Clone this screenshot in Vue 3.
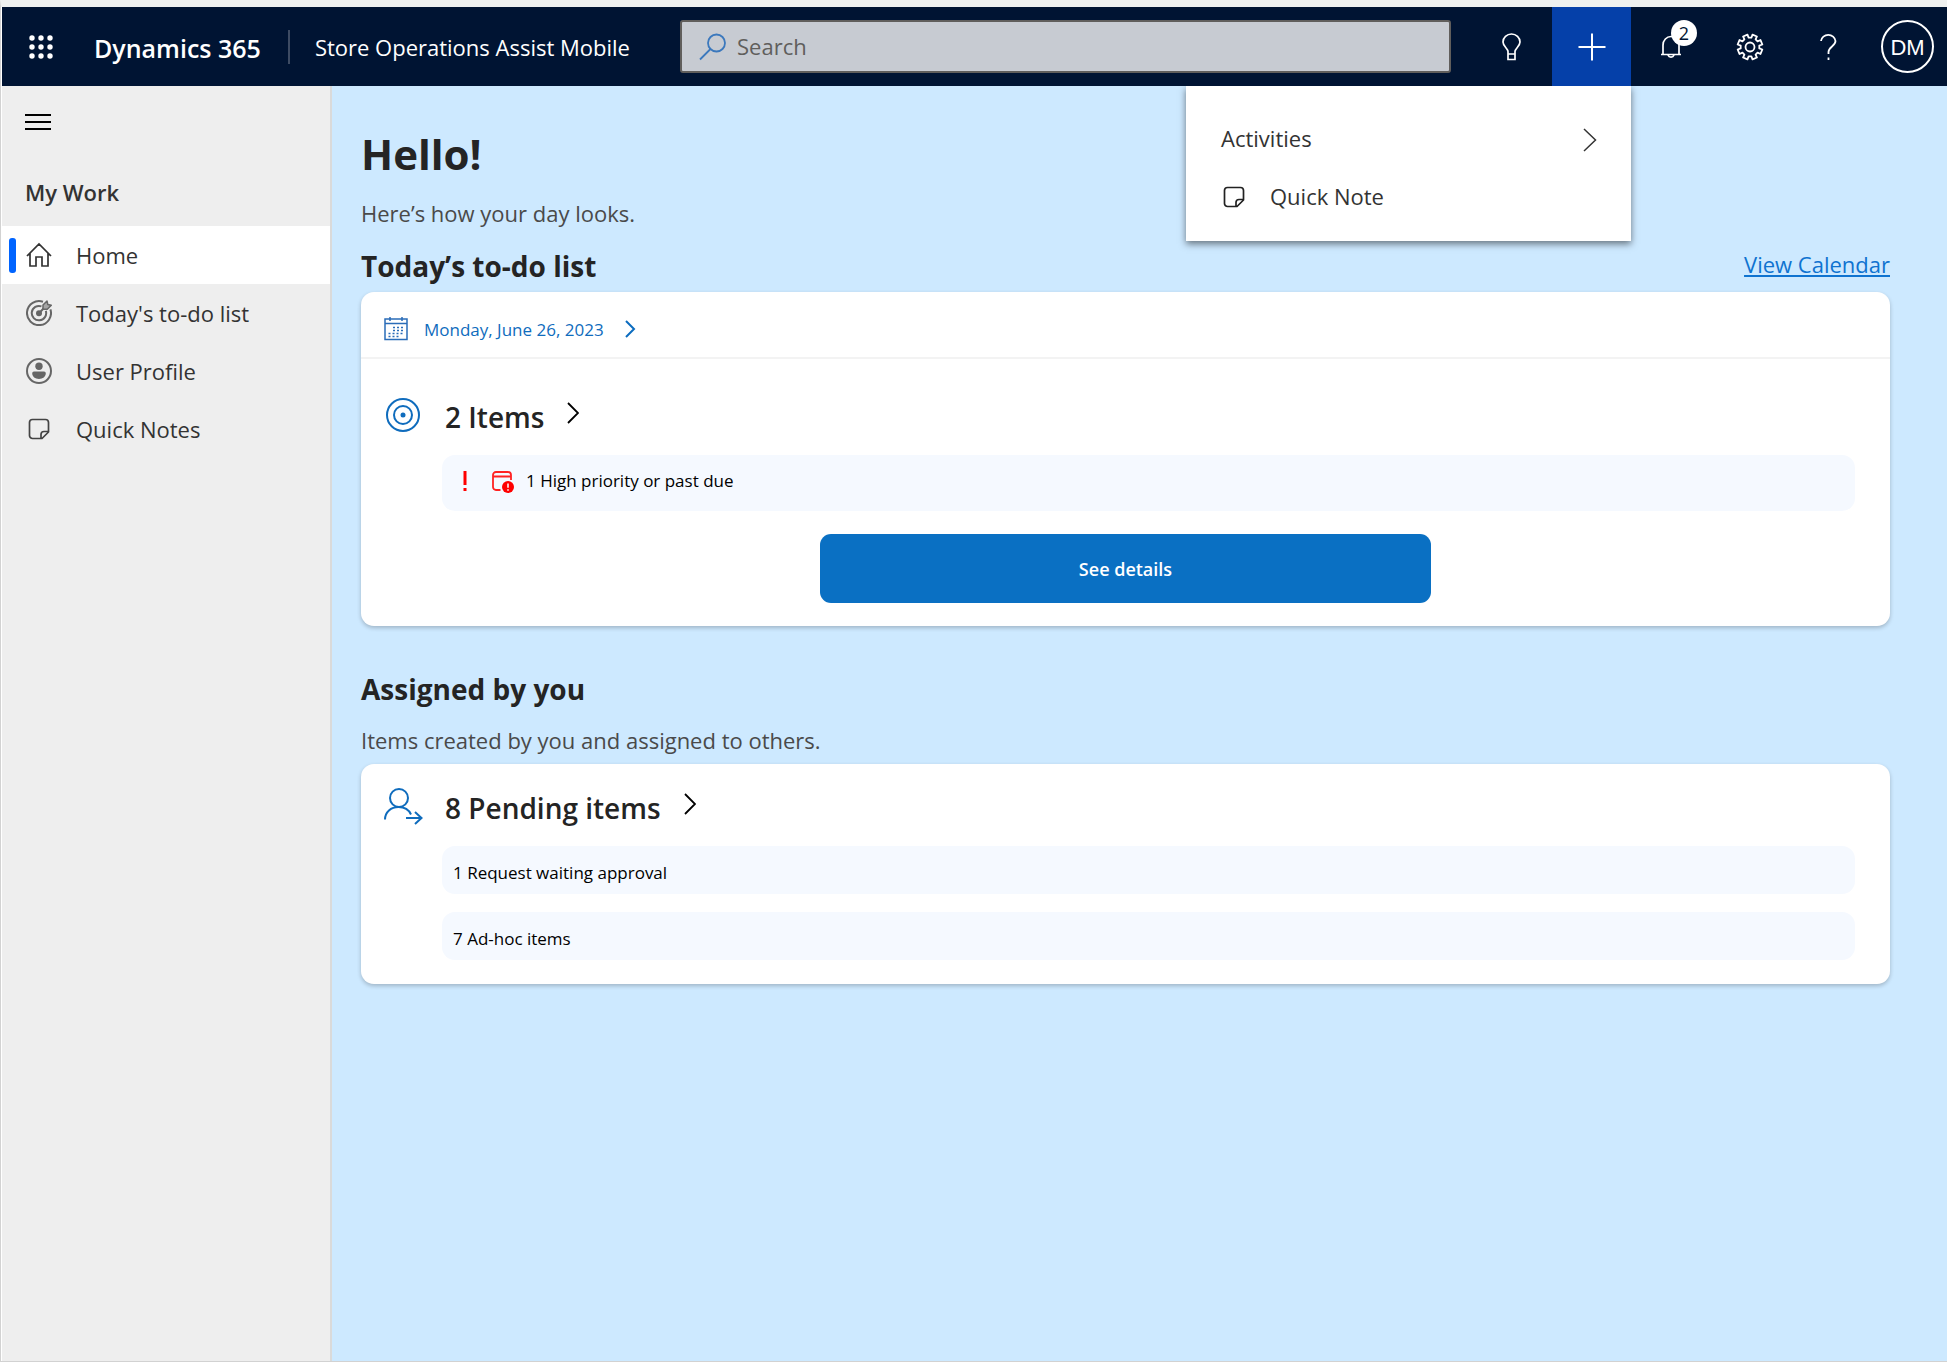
<script setup>
import { ref } from 'vue'

const query = ref('')

const navItems = [
  { label: 'Home', icon: 'home', active: true },
  { label: "Today's to-do list", icon: 'goal' },
  { label: 'User Profile', icon: 'user' },
  { label: 'Quick Notes', icon: 'note' },
]

const pending = ['1 Request waiting approval', '7 Ad-hoc items']

const dots = [4, 13, 22]

// Outline of the settings cog: eight teeth around a 28px box.
const polar = (r, deg) => {
  const a = (deg * Math.PI) / 180
  return `${(14 + r * Math.cos(a)).toFixed(2)} ${(14 + r * Math.sin(a)).toFixed(2)}`
}
const cog = Array.from({ length: 8 }, (_, i) => {
  const c = i * 45 + 22.5
  return `${i ? 'L' : 'M'}${polar(9.4, c - 14)} L${polar(12.6, c - 11)} L${polar(12.6, c + 11)} L${polar(9.4, c + 14)}`
}).join(' ') + ' Z'
</script>

<template>
  <div class="shell">
    <header class="topbar">
      <div class="brand">
        <button class="waffle" type="button" aria-label="App launcher">
          <svg width="26" height="26" viewBox="0 0 26 26" fill="#fff">
            <template v-for="y in dots" :key="y">
              <circle v-for="x in dots" :key="x" :cx="x" :cy="y" r="2.700" />
            </template>
          </svg>
        </button>
        <span class="product">Dynamics 365</span>
        <span class="divider"></span>
        <span class="app-name">Store Operations Assist Mobile</span>
      </div>

      <label class="search">
        <svg width="28" height="28" viewBox="0 0 28 28" fill="none" stroke="#3b78bd" stroke-width="1.800">
          <circle cx="17.500" cy="10" r="8.500" />
          <path d="M11.500 16 1 26.500" />
        </svg>
        <input v-model="query" type="search" placeholder="Search" aria-label="Search" />
      </label>

      <div class="actions">
        <button type="button" aria-label="Tips">
          <svg width="28" height="28" viewBox="0 0 28 28" fill="none" stroke="#fff" stroke-width="1.700">
            <path d="M9 21v-2.500c0-3-5-5-5-9.500a8.500 8 0 0 1 17 0c0 4.500-5 6.500-5 9.500v2.500M9 21h7v5.500h-7z" />
          </svg>
        </button>
        <button class="open" type="button" aria-label="New" aria-expanded="true">
          <svg width="28" height="28" viewBox="0 0 28 28" stroke="#fff" stroke-width="2">
            <path d="M14 .5v27M.5 14h27" />
          </svg>
        </button>
        <button type="button" aria-label="Notifications">
          <svg width="28" height="28" viewBox="0 0 28 28" fill="none" stroke="#fff" stroke-width="1.700">
            <path d="M4 21.500h20M6 21.500v-9.500a8 8.500 0 0 1 16 0v9.500M11 22a3.200 3.200 0 0 0 6 0" />
          </svg>
          <span class="count">2</span>
        </button>
        <button type="button" aria-label="Settings">
          <svg width="28" height="28" viewBox="0 0 28 28" fill="none" stroke="#fff" stroke-width="1.800" stroke-linejoin="round">
            <path :d="cog" />
            <circle cx="14" cy="14" r="4.500" />
          </svg>
        </button>
        <button type="button" aria-label="Help">
          <svg width="28" height="28" viewBox="0 0 28 28" fill="none" stroke="#fff" stroke-width="1.800">
            <path d="M6 8a7.300 7 0 0 1 14.500 0c0 5-7 6-7 11v2M13.500 24.500v2.500" />
          </svg>
        </button>
        <button type="button" aria-label="Account"><span class="avatar">DM</span></button>

        <div class="menu">
          <button type="button">
            Activities
            <svg class="end" width="14" height="24" viewBox="0 0 14 24" fill="none" stroke="#333" stroke-width="1.500">
              <path d="M1 1 12.500 12 1 23" />
            </svg>
          </button>
          <button type="button">
            <svg class="lead" width="26" height="26" viewBox="0 0 26 26" fill="none" stroke="#222" stroke-width="1.700" stroke-linejoin="round">
              <path d="M6.500 3.500h13a3 3 0 0 1 3 3v9.500l-6.500 6.500H6.500a3 3 0 0 1-3-3v-13a3 3 0 0 1 3-3zM22.500 15.500h-4.500a3 3 0 0 0-3 3v4.500" />
            </svg>
            Quick Note
          </button>
        </div>
      </div>
    </header>

    <div class="body">
      <aside class="sidebar">
        <button class="burger" type="button" aria-label="Toggle navigation">
          <svg width="26" height="18" viewBox="0 0 26 18" stroke="#000" stroke-width="2">
            <path d="M0 2h26M0 9h26M0 16h26" />
          </svg>
        </button>
        <h2 class="group">My Work</h2>
        <nav>
          <a v-for="item in navItems" :key="item.label" href="#" class="nav-item" :class="{ active: item.active }">
            <span class="marker"></span>
            <svg v-if="item.icon === 'home'" width="26" height="26" viewBox="0 0 26 26" fill="none" stroke="#333" stroke-width="1.700">
              <path d="M1 14 13 2l12 12M4 11.500v12.500h6v-9h6v9h6v-12.500" />
            </svg>
            <svg v-else-if="item.icon === 'goal'" width="26" height="26" viewBox="0 0 26 26" fill="none" stroke="#666" stroke-width="2">
              <path d="M17 1.800a12 12 0 1 0 7.400 7.600M15.500 6.400a7.200 7.200 0 1 0 4.300 4.500" />
              <circle cx="13" cy="13.200" r="3" fill="#666" stroke="none" />
              <path d="M13 13.200 18 8" />
              <path d="M17 8.500V5l4-4 .8 3.500 3.500.8-4 4H17z" fill="#a5a5a5" stroke-width="1.500" stroke-linejoin="round" />
            </svg>
            <svg v-else-if="item.icon === 'user'" width="26" height="26" viewBox="0 0 26 26" fill="#666">
              <circle cx="13" cy="13" r="12" fill="none" stroke="#666" stroke-width="2" />
              <circle cx="13" cy="8.300" r="3.700" />
              <path d="M8 13.500h10a1.800 1.800 0 0 1 1.800 1.800c0 3.500-3 5.700-6.800 5.700s-6.800-2.200-6.800-5.700A1.800 1.800 0 0 1 8 13.500z" />
            </svg>
            <svg v-else width="26" height="26" viewBox="0 0 26 26" fill="none" stroke="#444" stroke-width="1.700" stroke-linejoin="round">
              <path d="M6.500 3.500h13a3 3 0 0 1 3 3v9.500l-6.500 6.500H6.500a3 3 0 0 1-3-3v-13a3 3 0 0 1 3-3zM22.500 15.500h-4.500a3 3 0 0 0-3 3v4.500" />
            </svg>
            {{ item.label }}
          </a>
        </nav>
      </aside>

      <main class="content">
        <h1>Hello!</h1>
        <p class="sub">Here’s how your day looks.</p>

        <section class="todo">
          <div class="section-head">
            <h2>Today’s to-do list</h2>
            <a href="#">View Calendar</a>
          </div>
          <div class="card">
            <button class="date" type="button">
              <svg width="24" height="24" viewBox="0 0 24 24" fill="none" stroke="#2a6cb8" stroke-width="1.500">
                <path d="M1 2h22v20.500H1zM1 6.500h22M6 0v4M18 0v4" />
                <path d="M9 10.500h11M9 13.500h11M4.500 16.500h15.500M4.500 19.500h12" stroke-dasharray="2 2" />
              </svg>
              <span>Monday, June 26, 2023</span>
              <svg width="12" height="18" viewBox="0 0 12 18" fill="none" stroke="#0b6cbf" stroke-width="2">
                <path d="M2 1 10 9 2 17" />
              </svg>
            </button>
            <div class="card-body first">
              <div class="card-title">
                <svg class="glyph" width="40" height="38" viewBox="0 0 40 38" fill="none" stroke="#0f6cbd" stroke-width="2">
                  <circle cx="19" cy="18" r="16" />
                  <circle cx="19" cy="18" r="9" />
                  <circle cx="19" cy="18" r="2.500" fill="#0f6cbd" stroke="none" />
                </svg>
                <h3>2 Items</h3>
                <svg class="more" width="12" height="22" viewBox="0 0 12 22" fill="none" stroke="#000" stroke-width="1.800">
                  <path d="M1 1 11 11 1 21" />
                </svg>
              </div>
              <div class="pill tall">
                <svg width="6" height="22" viewBox="0 0 6 22" fill="#f00">
                  <path d="M1.500 1h3v14h-3zM1.500 18h3v3h-3z" />
                </svg>
                <svg width="22" height="24" viewBox="0 0 22 24" fill="none" stroke="#f22" stroke-width="1.800">
                  <path d="M8.500 20H4a3 3 0 0 1-3-3V5a3 3 0 0 1 3-3h12a3 3 0 0 1 3 3v5M1 6.500h18" />
                  <circle cx="16" cy="17" r="6" fill="#f00" stroke="none" />
                  <path d="M16 13.500v4.200M16 19.200v1.500" stroke="#fff" stroke-width="1.500" />
                </svg>
                <span>1 High priority or past due</span>
              </div>
            </div>
            <button class="primary" type="button">See details</button>
          </div>
        </section>

        <section class="assigned">
          <h2>Assigned by you</h2>
          <p class="sub">Items created by you and assigned to others.</p>
          <div class="card">
            <div class="card-body">
              <div class="card-title">
                <svg class="glyph" width="40" height="38" viewBox="0 0 40 38" fill="none" stroke="#0f6cbd" stroke-width="2">
                  <circle cx="15" cy="10" r="9" />
                  <path d="M1 31.500C1 24 7 19 14.500 19c6 0 10.500 3 12.500 7.500M22 30h15M31 24l6.500 6-6.500 6" />
                </svg>
                <h3>8 Pending items</h3>
                <svg class="more" width="12" height="22" viewBox="0 0 12 22" fill="none" stroke="#000" stroke-width="1.800">
                  <path d="M1 1 11 11 1 21" />
                </svg>
              </div>
              <div v-for="line in pending" :key="line" class="pill">{{ line }}</div>
            </div>
          </div>
        </section>
      </main>
    </div>
  </div>
</template>

<style>
body {
  margin: 0;
  background: #fff;
}
</style>

<style scoped>
.shell {
  box-sizing: border-box;
  min-height: 100vh;
  display: flex;
  flex-direction: column;
  padding-left: 1px;
  border-top: 7px solid #eff1f0;
  border-left: 1px solid #d2d2d2;
  border-bottom: 1px solid #d2d2d2;
  font-family: "Open Sans", "Noto Sans", sans-serif;
  font-size: 22px;
  line-height: 30px;
  color: #333;
}
.shell * {
  box-sizing: border-box;
}
button {
  padding: 0;
  border: 0;
  background: none;
  font: inherit;
  color: inherit;
  cursor: pointer;
}
svg {
  display: block;
  flex: none;
}
h1,
h2,
h3,
p {
  margin: 0;
}

.topbar {
  display: flex;
  align-items: center;
  height: 79px;
  background: #001433;
  color: #fff;
}
.brand {
  flex: none;
  display: flex;
  align-items: center;
  width: 678px;
  padding-left: 26px;
}
.waffle {
  margin-right: 40px;
}
.product {
  padding-top: 2px;
  font-size: 25px;
  font-weight: 600;
}
.divider {
  width: 2px;
  height: 34px;
  margin: 0 25px 0 27px;
  background: #3d4b63;
}
.search {
  flex: 1;
  display: flex;
  align-items: center;
  gap: 10px;
  height: 53px;
  padding-left: 17px;
  border: 2px solid #605e5c;
  border-radius: 3px;
  background: #c7cbd2;
}
.search input {
  flex: 1;
  min-width: 0;
  padding: 0 0 2px;
  border: 0;
  outline: 0;
  background: none;
  font: inherit;
}
.search input::placeholder {
  color: #605e5c;
  opacity: 1;
}
.actions {
  position: relative;
  flex: none;
  display: flex;
  margin-left: 22px;
}
.actions > button {
  position: relative;
  display: flex;
  align-items: center;
  justify-content: center;
  width: 79px;
  height: 79px;
}
.actions > .open {
  background: #0540a9;
}
.count {
  position: absolute;
  top: 13px;
  left: 40px;
  width: 26px;
  height: 26px;
  border-radius: 50%;
  background: #fff;
  color: #001433;
  font-size: 18px;
  line-height: 26px;
}
.avatar {
  width: 53px;
  height: 53px;
  border: 2px solid #fff;
  border-radius: 50%;
  font-family: "Liberation Sans", sans-serif;
  line-height: 51px;
}
.menu {
  position: absolute;
  top: 79px;
  right: 316px;
  z-index: 2;
  width: 445px;
  padding: 23px 34px 16px 32px;
  background: #fff;
  color: #333;
  box-shadow: 0 3px 7px rgba(0, 0, 0, 0.5);
  clip-path: inset(0 -12px -14px -12px);
}
.menu button {
  display: flex;
  align-items: center;
  width: 100%;
  height: 58px;
  padding-left: 3px;
}
.menu .end {
  margin: 3px 0 0 auto;
}
.menu .lead {
  margin: 2px 23px 0 0;
}

.body {
  flex: 1;
  display: flex;
}
.sidebar {
  flex: none;
  width: 330px;
  border-right: 2px solid #dadada;
  background: #eee;
}
.burger {
  display: flex;
  align-items: center;
  height: 72px;
  margin-left: 23px;
}
.group {
  height: 68px;
  padding-left: 23px;
  font-size: 22px;
  font-weight: 600;
  line-height: 68px;
}
.nav-item {
  display: flex;
  align-items: center;
  height: 58px;
  padding-left: 7px;
  color: #333;
  text-decoration: none;
}
.nav-item svg {
  margin: 0 24px 0 10px;
}
.marker {
  width: 7px;
  height: 35px;
  border-radius: 3px;
}
.active {
  background: #fff;
}
.active .marker {
  background: #0064ff;
}

.content {
  flex: 1;
  min-width: 0;
  padding: 38px 57px 38px 29px;
  background: #cde9ff;
}
h1 {
  font-size: 42px;
  line-height: 60px;
  color: #242424;
}
.content h2 {
  font-size: 28px;
  line-height: 40px;
  color: #242424;
}
.sub {
  color: #4a4a4a;
}
h1 + .sub {
  margin-top: 14px;
}
.section-head {
  display: flex;
  align-items: center;
  justify-content: space-between;
  margin: 18px 0 6px;
}
.section-head a {
  padding-bottom: 5px;
  color: #0f73d0;
}
.assigned {
  margin-top: 43px;
}
.assigned .sub {
  margin: 16px 0 9px;
}
.card {
  display: flow-root;
  border-radius: 13px;
  background: #fff;
  box-shadow: 0 2px 4px rgba(0, 0, 0, 0.22);
}
.date {
  display: flex;
  align-items: center;
  width: 100%;
  height: 67px;
  padding: 8px 0 0 23px;
  border-bottom: 2px solid #f3f3f3;
  font-size: 17px;
  color: #0f6cbd;
}
.date span {
  padding-top: 2px;
  margin: 0 20px 0 16px;
}
.card-body {
  padding: 24px 35px 24px 81px;
}
.card-body.first {
  padding: 38px 35px 0 81px;
}
.card-title {
  display: flex;
  align-items: center;
  height: 40px;
  margin-left: -58px;
}
.glyph {
  margin: 0 21px 2px 0;
}
h3 {
  font-size: 28px;
  font-weight: 600;
  line-height: 40px;
  color: #242424;
}
.more {
  margin: 0 0 8px 23px;
}
.pill {
  display: flex;
  align-items: center;
  height: 48px;
  margin-top: 18px;
  padding: 5px 0 0 11px;
  border-radius: 13px;
  background: #f5f9ff;
  font-size: 17px;
  color: #000;
}
.pill.tall {
  height: 56px;
  padding: 0 0 4px 20px;
}
.pill svg + svg {
  margin: 2px 12px 0 24px;
}
.primary {
  display: block;
  width: 40%;
  height: 69px;
  margin: 23px auto;
  border-radius: 11px;
  background: #0a70c3;
  color: #fff;
  font-size: 18px;
  font-weight: 600;
}
</style>
